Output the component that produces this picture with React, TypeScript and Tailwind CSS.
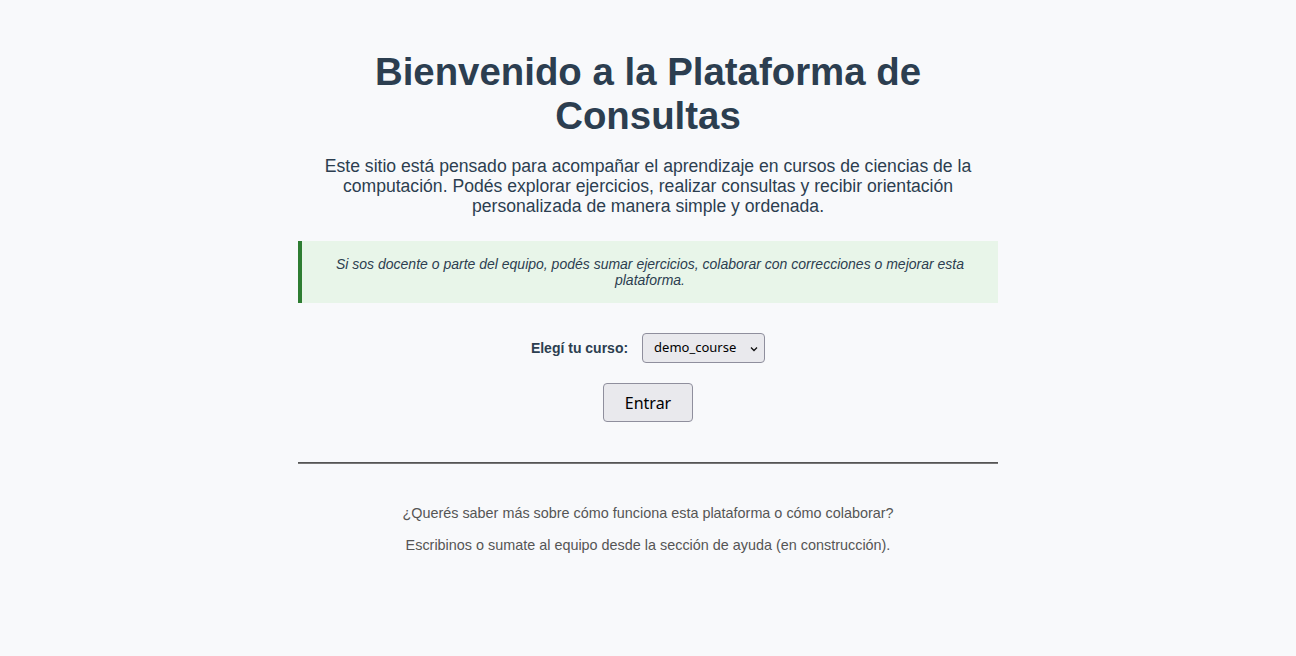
import React from "react";

export default function App() {
  return (
    <div className="min-h-[656px] w-full bg-[#f8f9fb] font-['Liberation_Sans',Arial,sans-serif] text-[#2c3e50]">
      <div className="mx-auto flex w-[700px] flex-col items-center pt-[50px]">
        <h1 className="text-center text-[38.4px] font-bold leading-[44px] text-[#2c3e50]">
          Bienvenido a la Plataforma de
          <br />
          Consultas
        </h1>
        <p className="mt-[18px] w-[660px] text-center text-[17.6px] leading-[20px] text-[#2c3e50]">
          Este sitio está pensado para acompañar el aprendizaje en cursos de ciencias de la computación. Podés explorar ejercicios, realizar consultas y recibir orientación personalizada de manera simple y ordenada.
        </p>
        <div className="mt-[25px] w-full border-l-4 border-[#2e7d32] bg-[#e8f5e9] px-[30px] py-[15px] text-center text-[14px] italic leading-[16px] text-[#2c3e50]">
          Si sos docente o parte del equipo, podés sumar ejercicios, colaborar con correcciones o mejorar esta plataforma.
        </div>
        <div className="mt-[30px] flex items-center gap-[14px]">
          <label className="text-[14px] font-bold text-[#2c3e50]">Elegí tu curso:</label>
          <div className="relative flex h-[30px] w-[123px] items-center rounded-[4px] border border-[#8f8f9d] bg-[#e9e9ed] pl-[11px] font-['Noto_Sans',sans-serif] text-[13px] text-black">
            demo_course
            <svg className="absolute right-[6px] top-[12px]" width="8" height="6" viewBox="0 0 8 6" fill="none">
              <path d="M1 1.5 L4 4.5 L7 1.5" stroke="#111" strokeWidth="1.3" />
            </svg>
          </div>
        </div>
        <button className="mt-[20px] flex h-[39px] w-[90px] items-center justify-center rounded-[4px] border border-[#8f8f9d] bg-[#e9e9ed] font-['Noto_Sans',sans-serif] text-[16px] text-black">
          Entrar
        </button>
        <div className="mt-[40px] h-[2px] w-full border-t border-b border-t-[#555] border-b-[#777]" />
        <p className="mt-[41px] text-center text-[14.4px] leading-[16px] text-[#555]">
          ¿Querés saber más sobre cómo funciona esta plataforma o cómo colaborar?
        </p>
        <p className="mt-[16px] text-center text-[14.4px] leading-[16px] text-[#555]">
          Escribinos o sumate al equipo desde la sección de ayuda (en construcción).
        </p>
      </div>
    </div>
  );
}
